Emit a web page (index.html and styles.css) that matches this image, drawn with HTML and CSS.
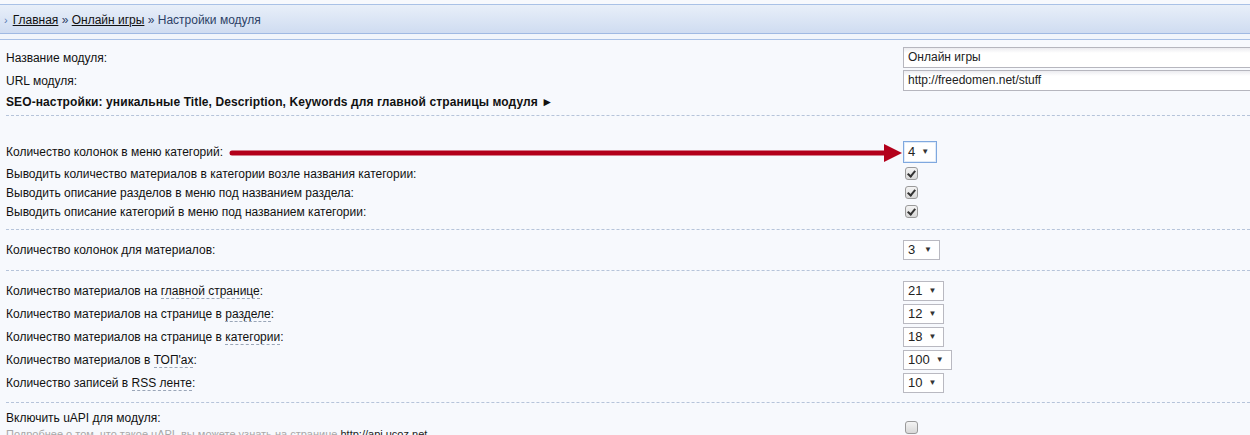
FILE: index.html
```html
<!DOCTYPE html>
<html lang="ru">
<head>
<meta charset="UTF-8" />
<title>Настройки модуля</title>
<link rel="stylesheet" href="styles.css">
</head>
<body>

<div class="crumbs">
  <span class="crumb-arrow">›</span>
  <span><a href="#">Главная</a> » <a href="#">Онлайн игры</a> » <span class="crumb-current">Настройки модуля</span></span>
</div>
<div class="crumbs-gap"></div>

<div class="settings">
  <div class="section">
    <div class="row row-input">
      <div class="label">Название модуля:</div>
      <div class="control"><div class="text-input">Онлайн игры</div></div>
    </div>
    <div class="row row-input">
      <div class="label">URL модуля:</div>
      <div class="control"><div class="text-input">http://freedomen.net/stuff</div></div>
    </div>
    <div class="row row-seo">
      <div class="label seo">SEO-настройки: уникальные Title, Description, Keywords для главной страницы модуля ►</div>
    </div>
  </div>

  <div class="section section-menu">
    <div class="row row-select">
      <div class="label">Количество колонок в меню категорий:</div>
      <div class="control"><div class="select focused">4 <span class="caret">▼</span></div></div>
    </div>
    <div class="row row-check">
      <div class="label">Выводить количество материалов в категории возле названия категории:</div>
      <div class="control"><span class="check on"></span></div>
    </div>
    <div class="row row-check">
      <div class="label">Выводить описание разделов в меню под названием раздела:</div>
      <div class="control"><span class="check on"></span></div>
    </div>
    <div class="row row-check">
      <div class="label">Выводить описание категорий в меню под названием категории:</div>
      <div class="control"><span class="check on"></span></div>
    </div>
  </div>

  <div class="section">
    <div class="row row-select">
      <div class="label">Количество колонок для материалов:</div>
      <div class="control"><div class="select">3 <span class="caret">▼</span></div></div>
    </div>
  </div>

  <div class="section">
    <div class="row row-num">
      <div class="label">Количество материалов на <span class="hint">главной странице</span>:</div>
      <div class="control"><div class="select">21 <span class="caret">▼</span></div></div>
    </div>
    <div class="row row-num">
      <div class="label">Количество материалов на странице в <span class="hint">разделе</span>:</div>
      <div class="control"><div class="select">12 <span class="caret">▼</span></div></div>
    </div>
    <div class="row row-num">
      <div class="label">Количество материалов на странице в <span class="hint">категории</span>:</div>
      <div class="control"><div class="select">18 <span class="caret">▼</span></div></div>
    </div>
    <div class="row row-num">
      <div class="label">Количество материалов в <span class="hint">ТОП'ах</span>:</div>
      <div class="control"><div class="select">100 <span class="caret">▼</span></div></div>
    </div>
    <div class="row row-num">
      <div class="label">Количество записей в <span class="hint">RSS ленте</span>:</div>
      <div class="control"><div class="select">10 <span class="caret">▼</span></div></div>
    </div>
  </div>

  <div class="section last">
    <div class="row row-api">
      <div class="label">
        Включить uAPI для модуля:
        <div class="note">Подробнее о том, что такое uAPI, вы можете узнать на странице <b>http://api.ucoz.net</b></div>
      </div>
      <div class="control"><span class="check"></span></div>
    </div>
  </div>
</div>

<!-- стрелка-указатель поверх формы -->
<svg class="pointer" width="680" height="20" viewBox="0 0 680 20">
  <line x1="3" y1="10" x2="658" y2="10" stroke="#b3001b" stroke-width="5" stroke-linecap="round" />
  <polygon points="655,1 673,10 655,19" fill="#b3001b" />
</svg>

</body>
</html>
```

FILE: styles.css
```css
/* страница настроек модуля */
body {
  margin: 0;
  font-family: 'Liberation Sans', Arial, sans-serif;
  font-size: 12px;
  color: #111;
  background: #f7f9fd;
  overflow: hidden;
  position: relative;
}
.crumbs {
  margin-top: 4px;
  height: 28px;
  border-top: 1px solid #a9c1e6;
  border-bottom: 1px solid #9fb9e3;
  background: linear-gradient(#e8eff9, #cfdcf1);
  display: flex;
  align-items: center;
  gap: 5px;
  padding-left: 4px;
  color: #2c3f66;
  padding-top: 1px;
  box-sizing: border-box;
  height: 30px;
}
.crumbs a {
  color: #111;
}
.crumb-arrow {
  color: #5a7cb5;
  font-size: 11px;
}
.crumbs-gap {
  height: 5px;
  background: #f1f5fb;
  border-bottom: 1px solid #a8c0e6;
}
.settings {
  padding: 0 0 0 6px;
}
.section {
  border-bottom: 1px dashed #b6c4da;
  padding: 6px 0 4px;
}
.section + .section {
  padding: 8px 0 8px;
}
.section.section-menu {
  padding-top: 24px;
}
.section.last {
  border-bottom: none;
}
.row {
  display: grid;
  grid-template-columns: 897px 1fr;
  align-items: center;
}
.row-input { height: 23px; }
.row-seo { height: 19px; }
.row-select { height: 24px; }
.row-check { height: 19px; }
.row-num { height: 23px; }
.row-api { height: 30px; align-items: start; }
.seo {
  font-weight: bold;
  letter-spacing: 0.1px;
  grid-column: 1 / 3;
}
.hint {
  border-bottom: 1px dashed #9aa6b8;
}
.note {
  color: #a8a8a8;
  font-size: 11px;
  margin-top: 3px;
}
.note b {
  color: #222;
  font-weight: normal;
}
.control {
  display: flex;
  align-items: center;
}
.text-input {
  width: 360px;
  box-sizing: border-box;
  height: 21px;
  line-height: 19px;
  border: 1px solid #b6b6be;
  background: linear-gradient(#ececf0, #fff 5px);
  padding-left: 4px;
  font-size: 12px;
  color: #222;
}
.select {
  height: 20px;
  box-sizing: border-box;
  border: 1px solid #b9b9c1;
  background: #fff;
  padding: 0 7px 0 4px;
  font-size: 13px;
  line-height: 18px;
  color: #222;
  display: flex;
  gap: 6px;
  min-width: 37px;
  justify-content: space-between;
}
.select.focused {
  height: 22px;
  min-width: 31px;
  border-color: #7fa8df;
  line-height: 20px;
  box-shadow: inset 0 0 0 1px #e0ebf8;
}
.caret {
  font-size: 8px;
  color: #333;
}
.check {
  width: 11px;
  height: 11px;
  margin-left: 2px;
  border: 1px solid #9a9a9a;
  border-radius: 3px;
  background: linear-gradient(#f4f4f4, #d8d8d8);
  position: relative;
}
.check.on::after {
  content: "";
  position: absolute;
  left: 3px;
  top: 1px;
  width: 3px;
  height: 6px;
  border: solid #333;
  border-width: 0 2px 2px 0;
  transform: rotate(40deg);
}
.row-api .control {
  padding-top: 10px;
}
.pointer {
  position: absolute;
  left: 229px;
  top: 143px;
}
```
